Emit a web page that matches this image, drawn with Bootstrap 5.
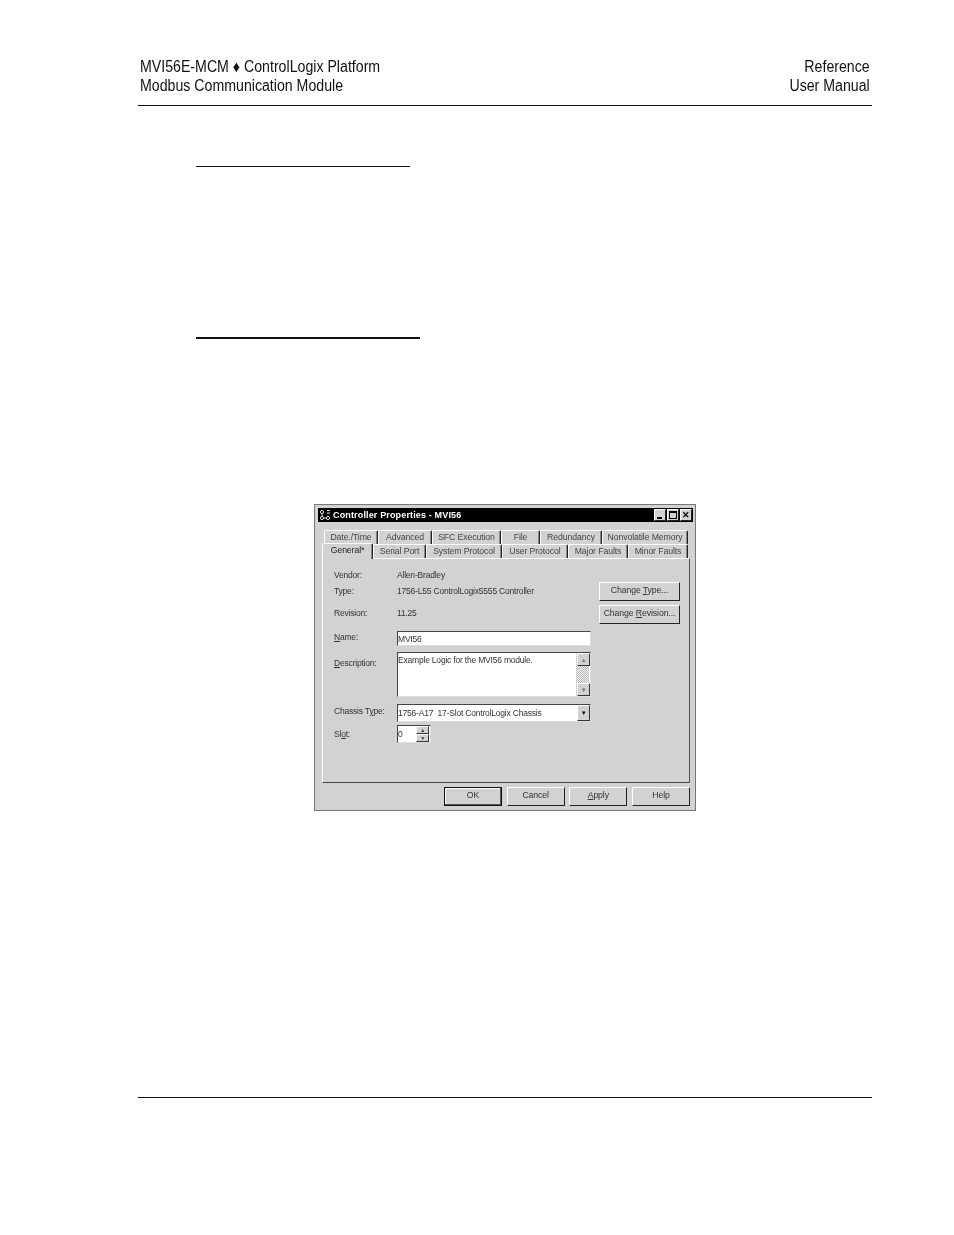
<!DOCTYPE html>
<html lang="en">
<head>
<meta charset="utf-8">
<title>Controller Properties</title>
<link href="https://cdn.jsdelivr.net/npm/bootstrap@5.3.0/dist/css/bootstrap.min.css" rel="stylesheet">
<style>
html,body{background:#fff;margin:0;height:1235px;overflow:hidden}
body{font-family:"Liberation Sans",Arial,sans-serif;color:#111}
.sheet{width:734px;margin-left:138px}
.pagehead{padding:57px 2px 10px;border-bottom:1px solid #111;font-size:16px;line-height:19px;white-space:nowrap}
.hd-l{transform:scaleX(.885);transform-origin:left center}
.hd-r{transform:scaleX(.885);transform-origin:right center}
.rule-a{width:214px;margin:60px 0 0 58px;border-top:1.5px solid #111}
.rule-b{width:224px;margin:170px 0 0 58px;border-top:2px solid #111}
.pagefoot{margin-top:286px;border-top:1px solid #111}
.dlg{width:382px;height:307px;margin:165px 0 0 176px;padding:3px 2px 0 3px;background:#d2d2d2;border:1px solid #777;font-size:8.5px;letter-spacing:-.2px;color:#333;line-height:12px;filter:blur(.3px)}
.ttl{height:14px;background:#000;color:#fff;font-weight:700;font-size:9px;padding:0 1px;letter-spacing:.15px}
.ttl svg{display:block;margin-right:2px}
.ttl-t{padding-bottom:1px}
.wb{width:12px;height:12px;background:#d2d2d2;border:1px solid;border-color:#fff #222 #222 #fff;color:#000;font-size:9px;line-height:10px;text-align:center;font-weight:700;letter-spacing:0}
.wb-min{margin-right:1px;display:flex;align-items:flex-end;padding:0 0 1px 2px}.wb-max{margin-right:1px;display:flex;align-items:center;justify-content:center}
.wb-bar{display:block;width:5px;height:2px;background:#000}
.wb-box{display:block;width:8px;height:8px;border:1px solid #000;border-top-width:2px}
.tabrow{height:14px}
.tabrow.one{margin:8px 0 0 6px}
.tabrow.two{margin:0 0 0 4px;position:relative;z-index:1}
.tb{height:14px;text-align:center;line-height:12px;border-top:1px solid #fff;border-left:1px solid #fff;border-right:1px solid #222;box-shadow:inset -1px 0 #888;border-radius:2px 2px 0 0;white-space:nowrap;color:#444;font-size:8.7px;letter-spacing:-.1px}
.tb.on{height:16px;margin-top:-1px;background:#d2d2d2;color:#222;line-height:12px}
.w39{width:39px}.w51{width:51px}.w53{width:53px}.w54{width:54px}.w60{width:60px}.w62{width:62px}.w66{width:66px}.w69{width:69px}.w76{width:76px}.w86{width:86px}
.panel{width:368px;height:225px;margin-left:4px;border:1px solid;border-color:#fff #555 #444 #fff;padding-left:11px}
.lblcol{display:grid;grid-template-columns:63px 194px;width:257px;align-items:start;align-content:start}
.gap0{padding-top:10px}.gap4{margin-top:4px}.gap10{margin-top:10px}.gap12{margin-top:12px}.gap6{margin-top:6px}.gap7{margin-top:7px}.gap3{margin-top:3px}
.pl-desc{padding-top:5px}.pl-chas{padding-top:1px}.pl-slot{padding-top:3px}
.fld{background:#fff;border:1px solid;border-color:#444 #ddd #ddd #444;padding:1px 1px 0 0;color:#333;height:16px}
.f-name{height:15px}.f-desc{height:45px;position:relative}.f-combo{height:18px;padding-top:2px}.f-spin{height:18px;width:34px;padding-top:2px;position:relative}
.sbar{position:absolute;right:1px;top:0;bottom:0;width:13px;background:repeating-conic-gradient(#bbb 0 25%,#eee 0 50%) 0 0/2px 2px}
.arr{width:13px;height:13px;background:#d2d2d2;border:1px solid;border-color:#fff #333 #333 #fff;position:absolute;right:0;display:flex;align-items:center;justify-content:center;font-size:6px;line-height:1;color:#777}
.arr.dk{color:#000;height:16px;top:0}
.arr.up{top:0}.arr.dn{bottom:0}
.spn{width:13px;height:8px;right:1px;font-size:5px;color:#333}
.spn.up{top:0}.spn.dn{bottom:0}
.btnc{width:81px;margin-left:8px;padding-top:23px}
.dbtn.btn{display:block;padding:0 0 3px;font-size:8.7px;letter-spacing:-.1px;line-height:12px;color:#333;background:#d2d2d2;border:1px solid;border-color:#fff #222 #222 #fff;border-radius:0;height:19px;width:100%}
.dbtn.btn+.dbtn.btn{margin-top:4px}
.footbtns{margin:4px 0 0 126px;width:246px}
.footbtns .btn{width:58px;height:19px;display:block;padding:0 0 3px;font-size:8.7px;letter-spacing:-.1px;line-height:13px;color:#333;background:#d2d2d2;border:1px solid;border-color:#fff #222 #222 #fff;border-radius:0}
.footbtns .btn.dflt{border-color:#111;box-shadow:inset -1px -1px #555,inset 1px 1px #fff}
</style>
</head>
<body>
<div class="sheet">
  <header class="pagehead d-flex justify-content-between">
    <div class="hd-l">MVI56E-MCM ♦ ControlLogix Platform<br>Modbus Communication Module</div>
    <div class="hd-r text-end">Reference<br>User Manual</div>
  </header>
  <div class="rule-a"></div>
  <div class="rule-b"></div>

  <section class="dlg">
    <div class="ttl d-flex align-items-center">
      <svg width="12" height="12" viewBox="0 0 12 12"><g fill="none" stroke="#ddd" stroke-width="1"><circle cx="3" cy="3" r="1.6"/><circle cx="3" cy="9" r="1.6"/><circle cx="9" cy="9" r="1.6"/><path d="M3 4.6v2.8M4.6 9h2.8M8 1.5h3M8 4h3"/></g></svg>
      <span class="ttl-t flex-grow-1">Controller Properties - MVI56</span>
      <span class="wb wb-min"><span class="wb-bar"></span></span><span class="wb wb-max"><span class="wb-box"></span></span><span class="wb">✕</span>
    </div>
    <div class="tabrow one d-flex">
      <div class="tb w54">Date./Time</div><div class="tb w54">Advanced</div><div class="tb w69">SFC Execution</div><div class="tb w39">File</div><div class="tb w62">Redundancy</div><div class="tb w86">Nonvolatile Memory</div>
    </div>
    <div class="tabrow two d-flex">
      <div class="tb on w51">General*</div><div class="tb w53">Serial Port</div><div class="tb w76">System Protocol</div><div class="tb w66">User Protocol</div><div class="tb w60">Major Faults</div><div class="tb w60">Minor Faults</div>
    </div>
    <div class="panel d-flex">
      <div class="lblcol">
        <div class="gap0">Vendor:</div><div class="gap0">Allen-Bradley</div>
        <div class="gap4">Type:</div><div class="gap4">1756-L55 ControlLogix5555 Controller</div>
        <div class="gap10">Revision:</div><div class="gap10">11.25</div>
        <div class="gap12"><u>N</u>ame:</div><div class="gap12 fld f-name">MVI56</div>
        <div class="gap6 pl-desc"><u>D</u>escription:</div>
        <div class="gap6 fld f-desc">Example Logic for the MVI56 module.<span class="sbar"></span><span class="arr up">▲</span><span class="arr dn">▼</span></div>
        <div class="gap7 pl-chas">Chassis T<u>y</u>pe:</div>
        <div class="gap7 fld f-combo position-relative">1756-A17&nbsp;&nbsp;17-Slot ControlLogix Chassis<span class="arr dk">▼</span></div>
        <div class="gap3 pl-slot">Sl<u>o</u>t:</div>
        <div class="gap3"><div class="fld f-spin">0<span class="arr spn up">▲</span><span class="arr spn dn">▼</span></div></div>
      </div>
      <div class="btnc">
        <button type="button" class="btn dbtn">Change <u>T</u>ype...</button>
        <button type="button" class="btn dbtn">Change <u>R</u>evision...</button>
      </div>
    </div>
    <div class="footbtns d-flex justify-content-between">
      <button type="button" class="btn dflt">OK</button>
      <button type="button" class="btn">Cancel</button>
      <button type="button" class="btn"><u>A</u>pply</button>
      <button type="button" class="btn">Help</button>
    </div>
  </section>

  <div class="pagefoot"></div>
</div>
<script src="https://cdn.jsdelivr.net/npm/bootstrap@5.3.0/dist/js/bootstrap.bundle.min.js"></script>
</body>
</html>
